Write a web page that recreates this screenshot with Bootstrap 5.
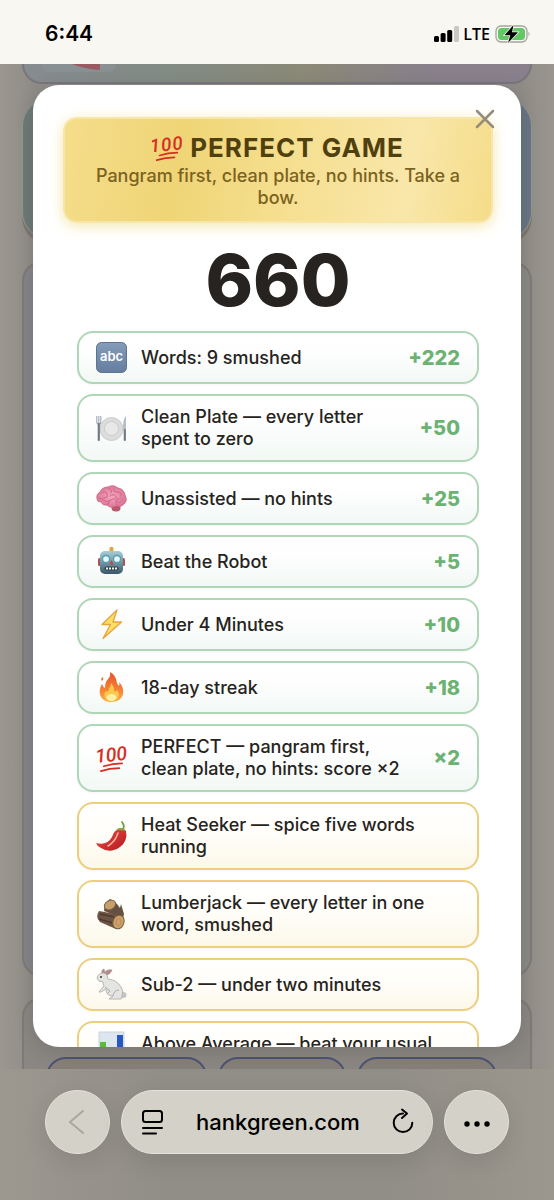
<!DOCTYPE html>
<html lang="en">
<head>
<meta charset="utf-8">
<meta name="viewport" content="width=device-width, initial-scale=1">
<title>hankgreen.com</title>
<link href="https://cdn.jsdelivr.net/npm/bootstrap@5.3.0/dist/css/bootstrap.min.css" rel="stylesheet">
<style>
  body { font-family: Inter, "Liberation Sans", sans-serif; background: #98948c; color: #262320; }
  .screen { height: 100vh; }
  .status { height: 64px; background: #f8f7f2; color: #000; padding: 3px 24px 0 45px; }
  .clock { font-size: 21px; font-weight: 600; }
  .lte { font-size: 16px; font-weight: 600; font-family: "Open Sans", sans-serif; }

  /* page and dialog share one grid cell */
  .stage { display: grid; grid-template: minmax(0, 1fr) / minmax(0, 1fr); min-height: 0; }
  .stage > * { grid-area: 1 / 1; min-height: 0; }
  .backpage { padding: 0 22px; background: linear-gradient(90deg, #9b9790, #8f8c87 6%, #8f8c87 94%, #9a968e); }
  .promo { height: 20px; border: 2px solid #78767c; border-top: 0; border-radius: 0 0 20px 20px; background: linear-gradient(90deg, #858b8f, #828b84 30%, #8b8977 55%, #88808a 80%, #887f8c); }
  .thumb { width: 74px; height: 8px; margin-left: 18px; border-radius: 0 0 12px 12px; background: #899094; }
  .tile { height: 142px; margin-top: 14px; border: 1px solid #8f9693; border-radius: 28px; background: linear-gradient(90deg, #6d7a75, #6c7982 70%, #697583); box-shadow: 0 5px 0 #7d776f; }
  .panel { height: 716px; margin-top: 21px; border: 2px solid #7e7a76; border-radius: 20px; background: linear-gradient(90deg, #858489, #8b8986); }
  .foot { height: 120px; margin-top: 20px; border: 2px solid #7e7a76; border-radius: 20px; background: #8a8783; padding: 58px 33px 0 22px; gap: 11px; }
  .chip { height: 50px; border: 2px solid #4e5376; border-radius: 20px; background: #857f77; }

  .sheet { margin: 21px 33px 22px; border-radius: 26px; background: #fff; padding: 32px 28px 0 30px; box-shadow: 0 4px 20px #0002; }
  .dismiss { position: absolute; top: 24px; right: 26px; color: #968c7a; line-height: 0; }
  .banner { border: 2px solid #f7e5a9; border-radius: 14px; padding: 12px 24px; background: linear-gradient(100deg, #f5dd8b, #efd576 27%, #f5de8d 50%, #f9e7aa 80%, #f4dc88); box-shadow: 0 3px 14px #efd57699; color: #51400f; }
  .banner h1 { font-size: 26px; line-height: 34px; font-weight: 700; letter-spacing: 1px; }
  .banner p { font-size: 18px; line-height: 22px; font-weight: 500; color: #7b6220; }
  .total { font-size: 72px; line-height: 74px; font-weight: 800; margin: 20px 0 14px; }
  .scores { gap: 10px; padding: 0 14px; }
  .score { gap: 14px; padding: 10px 17px; border: 2px solid #afd6b6; border-radius: 16px; background: linear-gradient(#fff, #fdfefd 40%, #f2f8f5); font-size: 18px; line-height: 22px; font-weight: 550; box-shadow: 0 1px 3px #0000000a; }
  .score.locked { border-color: #ebcf7f; background: linear-gradient(#fff, #fffefa 40%, #fcf8e9); }
  .pic { width: 31px; height: 29px; overflow: visible; flex: none; }
  .pts { font-size: 20px; font-weight: 800; color: #6bb273; }

  .toolbar { height: 131px; padding: 21px 45px 0; gap: 11px; background: linear-gradient(90deg, #9c9890, #918e87 30%, #918e87 70%, #9b978e); }
  .glass { height: 64px; background: #d4d1c9; border: 1px solid #e6e3dc; border-radius: 32px; color: #000; padding: 0; box-shadow: 0 8px 24px #00000018; }
  .round { width: 65px; flex: none; }
  .address { padding: 0 17px; }
  .address a { font-size: 22px; font-weight: 500; }
</style>
</head>
<body>
<svg width="0" height="0" class="position-absolute" aria-hidden="true">
  <defs>
    <linearGradient id="blue" x2="0" y2="1"><stop stop-color="#859bb9"/><stop offset="1" stop-color="#657d9f"/></linearGradient>
    <linearGradient id="metal" x2="0" y2="1"><stop stop-color="#a9cdd5"/><stop offset=".6" stop-color="#668b9b"/><stop offset="1" stop-color="#3c5666"/></linearGradient>
    <linearGradient id="flame" x2="0" y2="1"><stop stop-color="#e8502c"/><stop offset=".6" stop-color="#f58435"/><stop offset="1" stop-color="#f9b23f"/></linearGradient>
    <linearGradient id="pepper" x2="1" y2="1"><stop stop-color="#ee5148"/><stop offset="1" stop-color="#b3171c"/></linearGradient>
    <radialGradient id="pink"><stop stop-color="#f6a5bd"/><stop offset="1" stop-color="#dc7899"/></radialGradient>
    <symbol id="hundred" viewBox="0 0 32 30" overflow="visible">
      <text x="16" y="18" text-anchor="middle" transform="rotate(-6 16 15)" font-family="Roboto, sans-serif" font-size="20" font-style="italic" font-weight="500" fill="#d72d23">100</text>
      <path d="M8 23Q17 20 27 20M5 28Q14 25 24 25" fill="none" stroke="#d72d23" stroke-width="1.800" stroke-linecap="round"/>
    </symbol>
  </defs>
</svg>

<div class="screen d-flex flex-column overflow-hidden">
  <header class="status d-flex align-items-center flex-shrink-0">
    <span class="clock me-auto">6:44</span>
    <svg width="25" height="16" viewBox="0 0 25 16" aria-label="Signal"><rect y="10" width="5" height="6" rx="1.500"/><rect x="6.600" y="7" width="5" height="9" rx="1.500"/><rect x="13.200" y="4" width="5" height="12" rx="1.500"/><rect x="20" y="0" width="5" height="16" rx="1.500" fill="#c9c8c4"/></svg>
    <span class="lte ms-1 me-1">LTE</span>
    <svg width="36" height="20" viewBox="0 0 36 20" aria-label="Battery charging"><rect x="2" y="2" width="31" height="16" rx="5" fill="none" stroke="#a6a39d" stroke-width="1.300"/><rect x="4" y="4" width="27" height="12" rx="3.500" fill="#62c866"/><path d="M34.500 7.500q2 2.500 0 5z" fill="#a6a39d"/><path d="M19.500 1L10.500 11.200h5.800L14 19l10-10.800h-6z" stroke="#f8f7f2" stroke-width="1.500" paint-order="stroke"/></svg>
  </header>

  <main class="stage flex-grow-1 overflow-hidden">
    <div class="backpage overflow-hidden" aria-hidden="true">
      <div class="promo"><div class="thumb"><svg class="d-block ms-auto me-3" width="28" height="7" viewBox="0 0 28 7"><path d="M0 0h28v6Q12 5 0 0" fill="#9b5a62"/></svg></div></div>
      <div class="tile"></div>
      <div class="panel"></div>
      <div class="foot d-flex">
        <div class="chip" style="flex:161 1 0"></div><div class="chip" style="flex:127 1 0"></div><div class="chip" style="flex:140 1 0"></div>
      </div>
    </div>

    <section class="sheet position-relative overflow-hidden" role="dialog" aria-labelledby="result">
      <div class="banner text-center">
        <h1 id="result" class="m-0 d-flex justify-content-center align-items-center gap-2"><svg width="30" height="28"><use href="#hundred"/></svg>PERFECT GAME</h1>
        <p class="m-0">Pangram first, clean plate, no hints. Take a bow.</p>
      </div>
      <button type="button" class="dismiss btn p-0 border-0" aria-label="Close"><svg width="20" height="20" viewBox="0 0 20 20"><path d="M2 2l16 16M18 2L2 18" stroke="currentColor" stroke-width="2.500" stroke-linecap="round"/></svg></button>
      <div class="total text-center">660</div>

      <ul class="scores list-unstyled d-flex flex-column m-0">
        <li class="score d-flex align-items-center">
          <svg class="pic" viewBox="0 0 31 29"><rect x=".5" y="-.500" width="30" height="30" rx="5" fill="url(#blue)" stroke="#5d7391"/><text x="15.500" y="18" text-anchor="middle" font-family="Inter, sans-serif" font-weight="600" font-size="13" fill="#fff">abc</text></svg>
          <span class="flex-grow-1">Words: 9 smushed</span><span class="pts">+222</span>
        </li>
        <li class="score d-flex align-items-center">
          <svg class="pic" viewBox="0 0 31 29"><circle cx="15.500" cy="15" r="11.500" fill="#dcdcdc" stroke="#cdcdcd"/><circle cx="15.500" cy="14.500" r="7" fill="#e8e8e8" stroke="#c5c5c5" stroke-width=".8"/><path d="M.8 2v6q0 2 2 2t2-2V2M2.800 2v8" fill="none" stroke="#9fa9b3" stroke-width="1.100"/><path d="M2.800 10v16" stroke="#707a86" stroke-width="2.200" stroke-linecap="round"/><path d="M30 2q-3 2-3 14h3z" fill="#b6bec6"/><path d="M28.800 16v10" stroke="#707a86" stroke-width="2.200" stroke-linecap="round"/></svg>
          <span class="flex-grow-1">Clean Plate — every letter spent to zero</span><span class="pts">+50</span>
        </li>
        <li class="score d-flex align-items-center">
          <svg class="pic" viewBox="0 0 31 29"><ellipse cx="20" cy="24" rx="4.500" ry="3.500" fill="#b9586c"/><path d="M1 15Q0 10 4 8Q6 3 12 3Q17 0 22 4Q28 5 29 11Q32 17 28 20Q25 24 20 22Q15 25 11 21Q7 22 5 18Q1 18 1 15z" fill="url(#pink)" stroke="#c95f80" stroke-width=".8"/><path d="M5 9q4-3 6 1t-4 4M12 4q5 1 3 5M18 4q-2 4 3 4t4 4M3 14q4 1 6 3t6-1 6 1 6-2M14 12q4-3 6 1t5 1M13 17q1 4-2 3M20 17q-1 3 2 5" fill="none" stroke="#cf6688" stroke-width="1" stroke-linecap="round"/></svg>
          <span class="flex-grow-1">Unassisted — no hints</span><span class="pts">+25</span>
        </li>
        <li class="score d-flex align-items-center">
          <svg class="pic" viewBox="0 0 31 29"><path d="M13.500 5v-4q2-2.500 4 0v4z" fill="#dda33d"/><rect x="2" y="11" width="4" height="8" rx="1.500" fill="#a65450"/><rect x="25" y="11" width="4" height="8" rx="1.500" fill="#a65450"/><rect x="4" y="4" width="23" height="23" rx="5" fill="url(#metal)"/><circle cx="10" cy="12" r="3.500" fill="#e5fbff" stroke="#519eb4" stroke-width="1.300"/><circle cx="21" cy="12" r="3.500" fill="#e5fbff" stroke="#519eb4" stroke-width="1.300"/><path d="M15.500 13l-2.200 4.500h4.400z" fill="#bd4942"/><rect x="8.500" y="19.500" width="14" height="4" rx="2" fill="#2c4450"/><path d="M10 21.500h11" stroke="#eef4f5" stroke-width="2" stroke-dasharray="2 1"/></svg>
          <span class="flex-grow-1">Beat the Robot</span><span class="pts">+5</span>
        </li>
        <li class="score d-flex align-items-center">
          <svg class="pic" viewBox="0 0 31 29"><path d="M21 0L6 14.500h8.500L7 28.500 25.500 12H17z" fill="#fbdf67" stroke="#e9a33b" stroke-width="1.300" stroke-linejoin="round"/></svg>
          <span class="flex-grow-1">Under 4 Minutes</span><span class="pts">+10</span>
        </li>
        <li class="score d-flex align-items-center">
          <svg class="pic" viewBox="0 0 31 29"><path d="M15 29C6 29 2.500 22 4 16Q5 12 6 11Q7 14 9 15Q9 9 12 6Q15 3 14-1Q20 2 21 10Q22 12 23 13Q24 11 23 9Q28 14 27 21C26 26 21 29 15 29zM6 8Q8 6 7 4Q4 6 6 8z" fill="url(#flame)"/><path d="M15 28C8 28 7 21 10 18Q12 20 13 16Q15 13 15 10Q19 15 18 18Q20 19 21 17C25 22 22 28 15 28z" fill="#fcc84c"/><ellipse cx="15.500" cy="24.500" rx="5" ry="3.500" fill="#fdf0a4"/></svg>
          <span class="flex-grow-1">18-day streak</span><span class="pts">+18</span>
        </li>
        <li class="score d-flex align-items-center">
          <svg class="pic"><use href="#hundred"/></svg>
          <span class="flex-grow-1">PERFECT — pangram first, clean plate, no hints: score ×2</span><span class="pts">×2</span>
        </li>
        <li class="score locked d-flex align-items-center">
          <svg class="pic" viewBox="0 0 31 29"><path d="M27 7q2-3-1-7" fill="none" stroke="#759b43" stroke-width="1.800" stroke-linecap="round"/><path d="M21 8Q27 4 30 9Q32 19 24 25Q14 32 5 26Q1 24 0 21Q11 24 16 15Q18 9 21 8z" fill="url(#pepper)"/><path d="M20 8Q25 3 30 9Q25 8 20 8z" fill="#86a94e"/><path d="M22 11Q19 20 12 24" fill="none" stroke="#ffb3a2" stroke-width="1.500" stroke-linecap="round"/></svg>
          <span class="flex-grow-1">Heat Seeker — spice five words running</span>
        </li>
        <li class="score locked d-flex align-items-center">
          <svg class="pic" viewBox="0 0 31 29"><path d="M9 4L14-1 21 4 24 8 25 4 28 14 27 18 8 11z" fill="#655044"/><ellipse cx="14" cy="5" rx="6" ry="4.500" transform="rotate(-30 14 5)" fill="#c99f69" stroke="#755b43"/><path d="M3 11L25 15Q31 20 26 26L20 29 4 22Q-1 17 3 11z" fill="#6c5343"/><path d="M4 14l14 3M3 19l14 4" stroke="#4d3b32" stroke-width="1.500"/><ellipse cx="22.500" cy="22" rx="5.500" ry="7" transform="rotate(20 22.500 22)" fill="#cda26a" stroke="#7a5c41"/><ellipse cx="22.500" cy="22" rx="2.500" ry="3.500" fill="none" stroke="#b38150" stroke-width=".8"/></svg>
          <span class="flex-grow-1">Lumberjack — every letter in one word, smushed</span>
        </li>
        <li class="score locked d-flex align-items-center">
          <svg class="pic" viewBox="0 0 31 29"><circle cx="27.500" cy="25" r="3" fill="#c5c5c5"/><path d="M8 4Q10-1 16 0Q14 5 10 5zM6 3Q5 0 8-1L9 4z" fill="#b98b8c" stroke="#9a8b89" stroke-width=".7"/><path d="M1 8Q2 3 8 3Q12 4 12 9Q21 10 25 17Q28 21 26 26L25 29H13L17 26Q10 26 10 19L5 22H3L8 16Q7 14 7 12Q2 12 1 8z" fill="#e4e4e2" stroke="#a8a8a5" stroke-width=".8"/><circle cx="5" cy="7" r="1" fill="#343434"/><path d="M17 26Q18 20 23 20M9 17l5 4-3 3" fill="none" stroke="#aaa" stroke-width="1"/></svg>
          <span class="flex-grow-1">Sub-2 — under two minutes</span>
        </li>
        <li class="score locked d-flex align-items-start">
          <svg class="pic" viewBox="0 0 31 29"><rect x="3" y="-1" width="25" height="30" fill="#dde6ef" stroke="#c9d4de"/><rect x="4" y="9" width="6" height="20" fill="#59bd38"/><rect x="12.500" y="17" width="6" height="12" fill="#d54b3f"/><rect x="21" y="2" width="6" height="27" fill="#2658c4"/></svg>
          <span class="flex-grow-1">Above Average — beat your usual</span>
        </li>
      </ul>
    </section>
  </main>

  <nav class="toolbar d-flex align-items-start flex-shrink-0" aria-label="Browser">
    <button type="button" class="glass round btn" aria-label="Back"><svg width="20" height="26" viewBox="0 0 20 26"><path d="M15 2L2 13l13 11" fill="none" stroke="#aaa7a0" stroke-width="2" stroke-linecap="round" stroke-linejoin="round"/></svg></button>
    <div class="glass address flex-grow-1 d-flex align-items-center justify-content-between">
      <button type="button" class="btn p-0 border-0" aria-label="Page menu"><svg width="26" height="28" viewBox="0 0 26 28"><rect x="4" y="3" width="19" height="11" rx="2.500" fill="none" stroke="#000" stroke-width="2"/><path d="M4 20h19M4 25.500h13" stroke="#000" stroke-width="2" stroke-linecap="round"/></svg></button>
      <a href="#" class="text-black text-decoration-none">hankgreen.com</a>
      <button type="button" class="btn p-0 border-0" aria-label="Reload"><svg width="24" height="28" viewBox="0 0 24 28"><path d="M12 5.500a9.300 9.300 0 1 0 9.300 9.300M11 1.500l5 4-5 4.500" fill="none" stroke="#000" stroke-width="2" stroke-linecap="round" stroke-linejoin="round"/></svg></button>
    </div>
    <button type="button" class="glass round btn" aria-label="More"><svg width="28" height="8" viewBox="0 0 28 8"><circle cx="4" cy="4" r="2.700"/><circle cx="14" cy="4" r="2.700"/><circle cx="24" cy="4" r="2.700"/></svg></button>
  </nav>
</div>
<script src="https://cdn.jsdelivr.net/npm/bootstrap@5.3.0/dist/js/bootstrap.bundle.min.js"></script>
</body>
</html>
